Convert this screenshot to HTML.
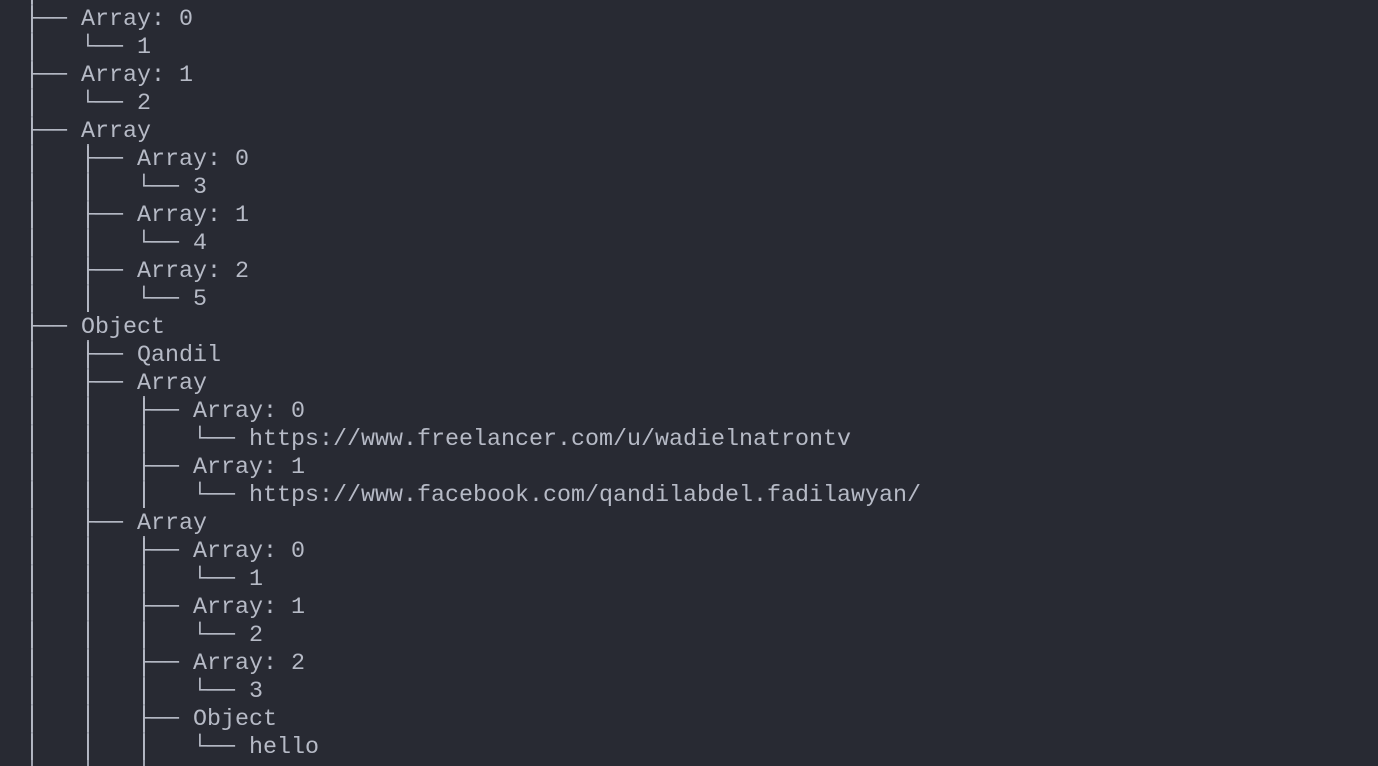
<!DOCTYPE html>
<html><head><meta charset="utf-8"><style>
html,body{margin:0;padding:0;background:#282a33;width:1378px;height:766px;overflow:hidden;position:relative}
pre{position:absolute;left:25px;top:-22px;margin:0;font-family:"Liberation Mono","DejaVu Sans Mono",monospace;font-size:23.33px;line-height:28px;color:#b6bac6;white-space:pre}
.v{position:absolute;width:2px;background:#9ea2ae}
</style></head><body>
<div class="v" style="left:31px;top:0;height:766px"></div>
<div class="v" style="left:87px;top:144px;height:168px"></div>
<div class="v" style="left:87px;top:340px;height:426px"></div>
<div class="v" style="left:143px;top:396px;height:112px"></div>
<div class="v" style="left:143px;top:536px;height:230px"></div>
<pre>│
├── Array: 0
│   └── 1
├── Array: 1
│   └── 2
├── Array
│   ├── Array: 0
│   │   └── 3
│   ├── Array: 1
│   │   └── 4
│   ├── Array: 2
│   │   └── 5
├── Object
│   ├── Qandil
│   ├── Array
│   │   ├── Array: 0
│   │   │   └── https://www.freelancer.com/u/wadielnatrontv
│   │   ├── Array: 1
│   │   │   └── https://www.facebook.com/qandilabdel.fadilawyan/
│   ├── Array
│   │   ├── Array: 0
│   │   │   └── 1
│   │   ├── Array: 1
│   │   │   └── 2
│   │   ├── Array: 2
│   │   │   └── 3
│   │   ├── Object
│   │   │   └── hello</pre>
</body></html>
